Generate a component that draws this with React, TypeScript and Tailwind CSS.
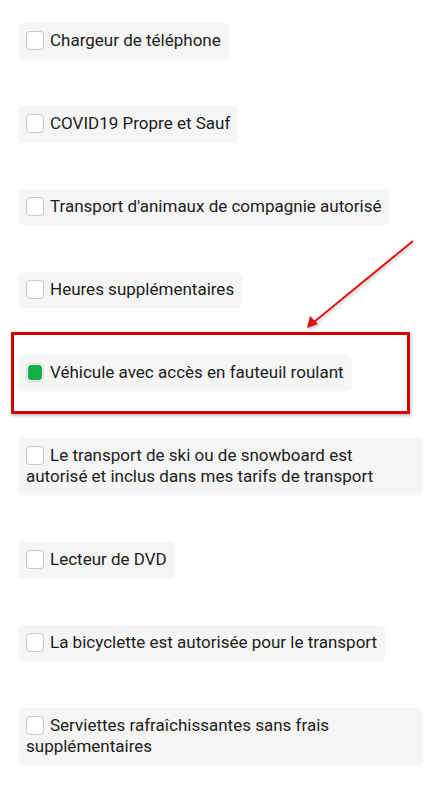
import React from 'react';

const options = [
  { label: 'Chargeur de téléphone', checked: false },
  { label: 'COVID19 Propre et Sauf', checked: false },
  { label: "Transport d'animaux de compagnie autorisé", checked: false },
  { label: 'Heures supplémentaires', checked: false },
  { label: 'Véhicule avec accès en fauteuil roulant', checked: true },
  { label: 'Le transport de ski ou de snowboard est autorisé et inclus dans mes tarifs de transport', checked: false },
  { label: 'Lecteur de DVD', checked: false },
  { label: 'La bicyclette est autorisée pour le transport', checked: false },
  { label: 'Serviettes rafraîchissantes sans frais supplémentaires', checked: false },
];

function Option({ label, checked }: { label: string; checked: boolean }) {
  return (
    <div className="self-start max-w-[405px] rounded-[6px] bg-[#f5f5f5] px-2 py-[7px] text-[17px] leading-[21px] text-[#1c1c1c] shadow-[0_1px_2px_rgba(0,0,0,0.06)]">
      <span
        className={`mr-[6px] inline-block h-[19px] w-[18px] rounded-[4px] border align-[-4px] ${
          checked ? 'border-[#d6d6d6] bg-white p-[1px]' : 'border-[#c8c8c8] bg-white'
        }`}
      >
        {checked && <span className="block h-full w-full rounded-[3px] bg-[#12b045]" />}
      </span>
      {label}
    </div>
  );
}

export default function App() {
  return (
    <div className="relative min-h-[796px] w-[441px] bg-white font-['Roboto',sans-serif]">
      <div className="flex flex-col gap-[48px] px-[18px] pt-[23px]">
        {options.map((o) => (
          <Option key={o.label} label={o.label} checked={o.checked} />
        ))}
      </div>

      {/* annotation overlay */}
      <div className="pointer-events-none absolute left-[11px] top-[332px] h-[82px] w-[399px] border-[3px] border-[#d40000] shadow-[1px_2px_3px_rgba(0,0,0,0.25)]" />
      <svg className="pointer-events-none absolute left-0 top-0" width="441" height="796">
        <g style={{ filter: 'drop-shadow(1px 2px 1px rgba(0,0,0,0.2))' }}>
          <line x1="413" y1="241" x2="314" y2="322" stroke="#e01010" strokeWidth="2" />
          <polygon points="307,328 310,316 318,324" fill="#e01010" />
        </g>
      </svg>
    </div>
  );
}
